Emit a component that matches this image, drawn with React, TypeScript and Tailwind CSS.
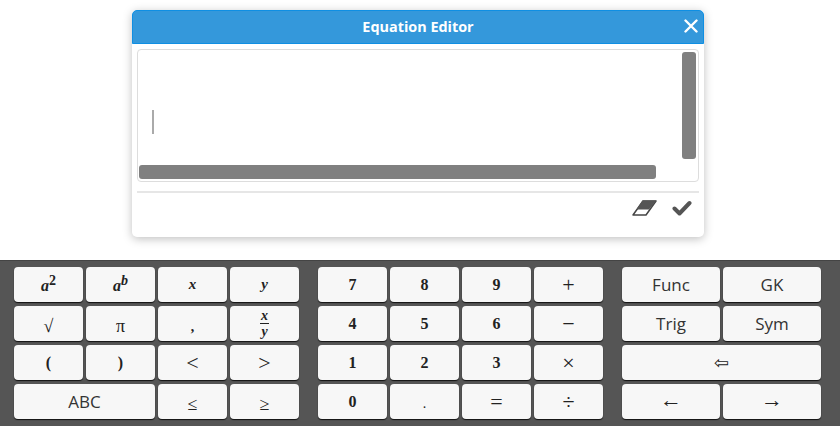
import type { ReactNode } from "react";

const SERIF = "font-['Liberation_Serif',serif]";

function Key({ wide, children }: { wide?: boolean; children: ReactNode }) {
    return (
        <div
            className={`flex h-[35px] items-center justify-center rounded-[4px] bg-[#f7f7f7] text-[#333] shadow-[0_1px_1px_#111] ${wide ? "col-span-2" : ""}`}
        >
            {children}
        </div>
    );
}

function Num({ children }: { children: ReactNode }) {
    return <span className={`${SERIF} text-[16px] font-bold text-[#222]`}>{children}</span>;
}

function Var({ children }: { children: ReactNode }) {
    return <span className={`${SERIF} text-[15px] font-bold italic text-[#222]`}>{children}</span>;
}

function Sym({ children }: { children: ReactNode }) {
    return <span className={`${SERIF} text-[22px] leading-none text-[#222]`}>{children}</span>;
}

function SmallSym({ children }: { children: ReactNode }) {
    return <span className={`${SERIF} mt-[5px] text-[18px] leading-none text-[#222]`}>{children}</span>;
}

function Txt({ children }: { children: ReactNode }) {
    return <span className="font-['Open_Sans',sans-serif] text-[17px] text-[#333]">{children}</span>;
}

function Power({ exp, upright }: { exp: string; upright?: boolean }) {
    return (
        <span className={`${SERIF} flex items-start text-[16px] font-bold italic leading-[18px] text-[#222]`}>
            <span className="mt-[3px]">a</span>
            <span className={`text-[14px] leading-[14px] ${upright ? "not-italic" : ""}`}>{exp}</span>
        </span>
    );
}

export default function App() {
    return (
        <div className="flex h-[426px] w-[840px] flex-col justify-between overflow-hidden bg-white">
            <div className="ml-[132px] mt-[10px] w-[572px] rounded-[5px] bg-white shadow-[0_2px_10px_rgba(0,0,0,0.25)]">
                <div className="relative flex h-[34px] items-center justify-center rounded-t-[5px] border border-[#0f8fe3] bg-[#3498db] font-['Open_Sans',sans-serif] text-[14.4px] font-bold text-white">
                    Equation Editor
                    <svg className="absolute right-[5px] top-[8px]" width="14" height="14" viewBox="0 0 14 14">
                        <path d="M1.5 1.5l11 11M12.5 1.5l-11 11" stroke="#fff" strokeWidth="2.4" strokeLinecap="round" />
                    </svg>
                </div>
                <div className="px-[5px] pt-[5px]">
                    <div className="relative h-[133px] rounded-[4px] border border-[#ddd] bg-white">
                        <div className="absolute left-[14px] top-[60px] h-[24px] w-[2px] bg-[#aaa]" />
                        <div className="absolute right-[2px] top-[2px] h-[107px] w-[14px] rounded-[3px] bg-[#808080]" />
                        <div className="absolute bottom-[2px] left-[1px] h-[14px] w-[517px] rounded-[3px] bg-[#808080]" />
                    </div>
                    <div className="mt-[9px] h-[2px] bg-[#e6e6e6]" />
                    <div className="flex h-[44px] items-start justify-end gap-[15px] pr-[7px] pt-[7px]">
                        <svg width="25" height="16" viewBox="0 0 25 16">
                            <path d="M11 1h13L14 15H1z" fill="#fff" stroke="#444" strokeWidth="1.5" strokeLinejoin="round" />
                            <path d="M10.5 0.5h14L17 9.5H4.5z" fill="#555" />
                        </svg>
                        <svg width="20" height="16" viewBox="0 0 20 16">
                            <path d="M2.5 8.5l5 5L17.5 3" fill="none" stroke="#555" strokeWidth="4" strokeLinejoin="round" strokeLinecap="round" />
                        </svg>
                    </div>
                </div>
            </div>

            <div className="flex h-[166px] gap-[19px] border-t border-[#444] bg-[#555] pl-[14px] pt-[6px]">
                <div className="grid w-[285px] grid-cols-4 content-start gap-x-[3px] gap-y-[4px]">
                    <Key><Power exp="2" upright /></Key>
                    <Key><Power exp="b" /></Key>
                    <Key><Var>x</Var></Key>
                    <Key><Var>y</Var></Key>
                    <Key><SmallSym>√</SmallSym></Key>
                    <Key><SmallSym>π</SmallSym></Key>
                    <Key><span className={`${SERIF} mt-[6px] text-[14px] font-bold text-[#222]`}>,</span></Key>
                    <Key>
                        <span className={`${SERIF} flex flex-col items-center text-[14px] font-bold italic leading-[15px] text-[#222]`}>
                            <span className="border-b border-[#222] px-[1px]">x</span>
                            <span>y</span>
                        </span>
                    </Key>
                    <Key><Num>(</Num></Key>
                    <Key><Num>)</Num></Key>
                    <Key><Sym>&lt;</Sym></Key>
                    <Key><Sym>&gt;</Sym></Key>
                    <Key wide><Txt>ABC</Txt></Key>
                    <Key><SmallSym>≤</SmallSym></Key>
                    <Key><SmallSym>≥</SmallSym></Key>
                </div>
                <div className="grid w-[285px] grid-cols-4 content-start gap-x-[3px] gap-y-[4px]">
                    <Key><Num>7</Num></Key>
                    <Key><Num>8</Num></Key>
                    <Key><Num>9</Num></Key>
                    <Key><Sym>+</Sym></Key>
                    <Key><Num>4</Num></Key>
                    <Key><Num>5</Num></Key>
                    <Key><Num>6</Num></Key>
                    <Key><Sym>−</Sym></Key>
                    <Key><Num>1</Num></Key>
                    <Key><Num>2</Num></Key>
                    <Key><Num>3</Num></Key>
                    <Key><Sym>×</Sym></Key>
                    <Key><Num>0</Num></Key>
                    <Key><span className={`${SERIF} mt-[4px] text-[14px] text-[#222]`}>.</span></Key>
                    <Key><Sym>=</Sym></Key>
                    <Key><Sym>÷</Sym></Key>
                </div>
                <div className="grid w-[199px] grid-cols-2 content-start gap-x-[3px] gap-y-[4px]">
                    <Key><Txt>Func</Txt></Key>
                    <Key><Txt>GK</Txt></Key>
                    <Key><Txt>Trig</Txt></Key>
                    <Key><Txt>Sym</Txt></Key>
                    <Key wide><span className="font-['DejaVu_Sans',sans-serif] text-[18px] leading-none text-[#222]">⇦</span></Key>
                    <Key><span className={`${SERIF} mb-[3px] text-[22px] leading-none text-[#222]`}>←</span></Key>
                    <Key><span className={`${SERIF} mb-[3px] text-[22px] leading-none text-[#222]`}>→</span></Key>
                </div>
            </div>
        </div>
    );
}
